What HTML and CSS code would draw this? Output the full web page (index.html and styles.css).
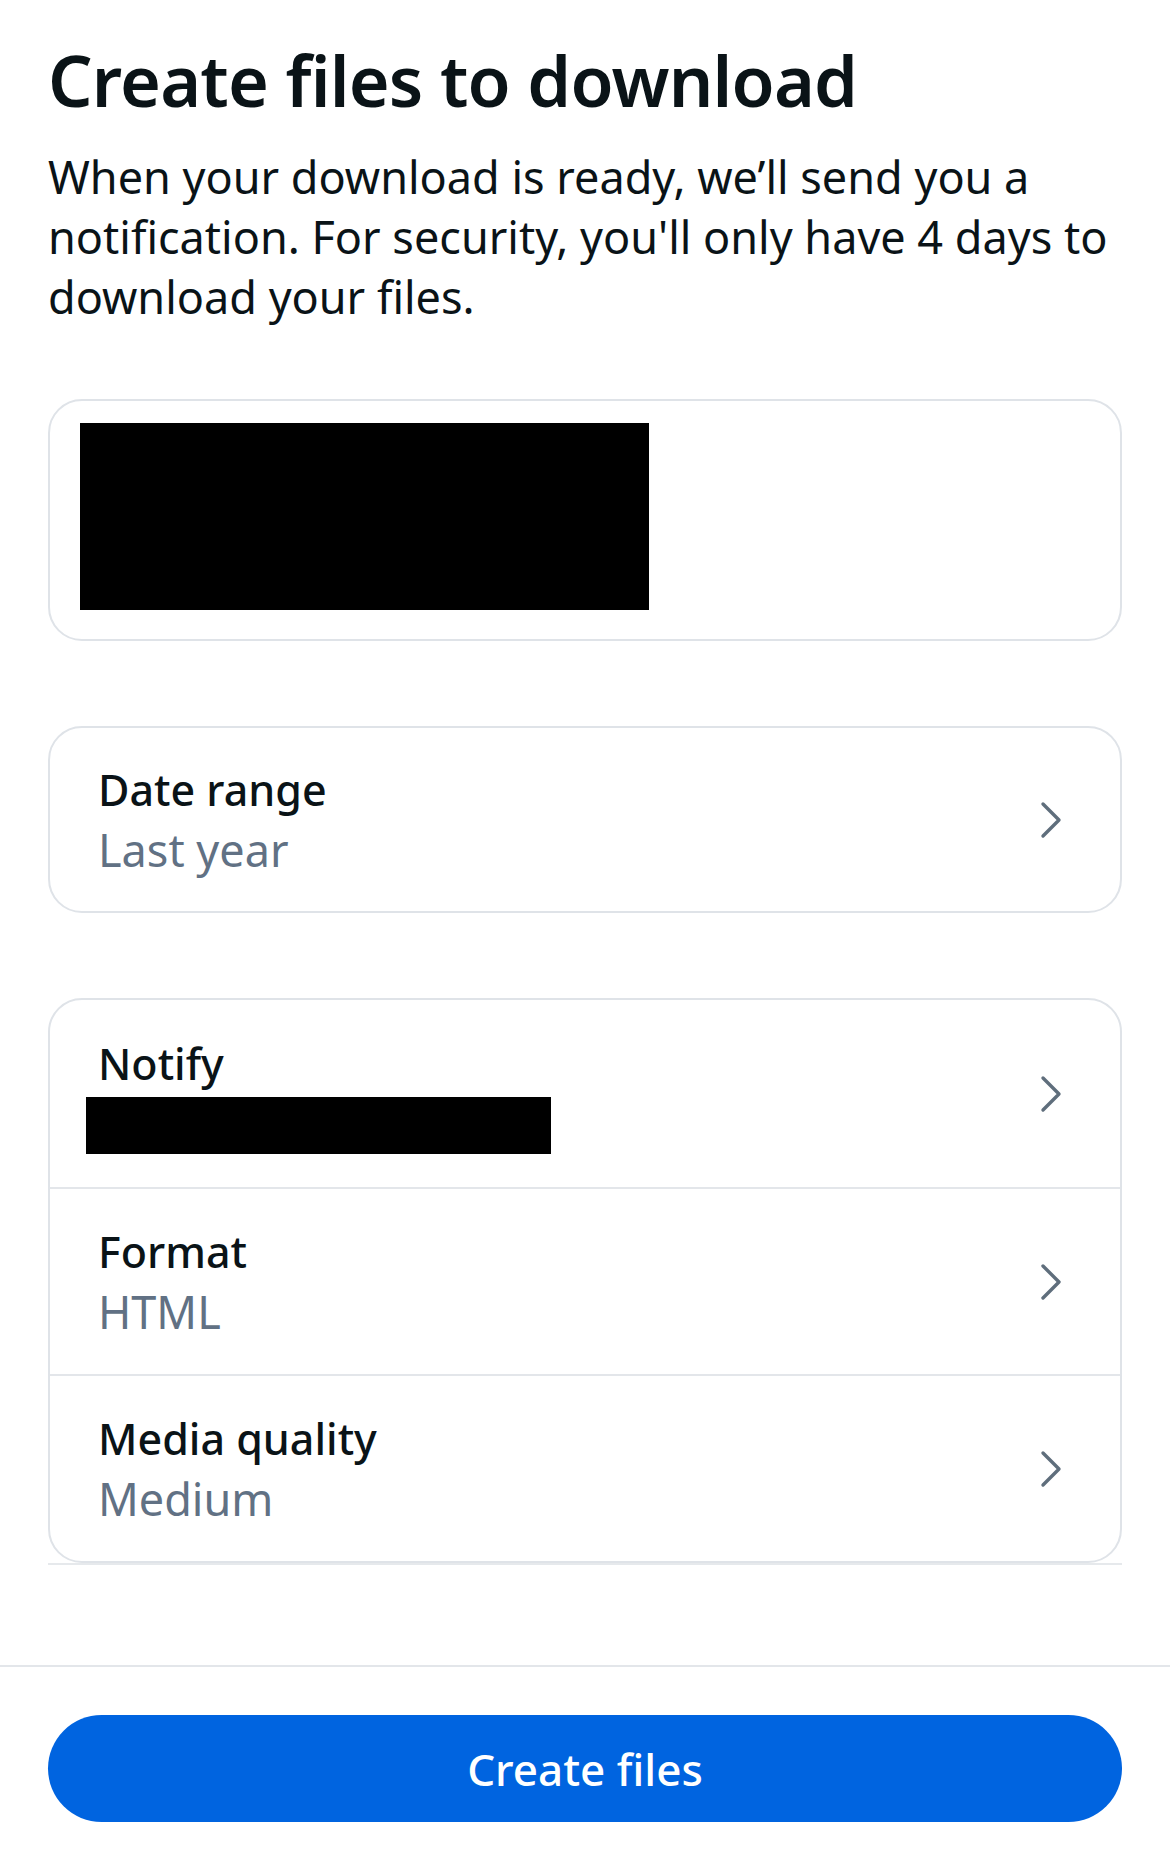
FILE: index.html
```html
<!DOCTYPE html>
<html lang="en">
<head>
<meta charset="utf-8">
<title>Create files to download</title>
<link rel="stylesheet" href="styles.css">
</head>
<body>
<div class="page">
  <main class="content">
    <h1 class="title">Create files to download</h1>
    <p class="intro">When your download is ready, we’ll send you a notification. For security, you'll only have 4 days to download your files.</p>

    <section class="card card-account">
      <div class="redact redact-account"></div>
    </section>

    <section class="card">
      <div class="row">
        <div class="row-text">
          <div class="row-label">Date range</div>
          <div class="row-value">Last year</div>
        </div>
        <svg class="chevron" viewBox="0 0 24 40" aria-hidden="true"><path d="M4 4 L20 20 L4 36"/></svg>
      </div>
    </section>

    <section class="card card-list">
      <div class="row">
        <div class="row-text">
          <div class="row-label">Notify</div>
          <div class="redact redact-notify"></div>
        </div>
        <svg class="chevron" viewBox="0 0 24 40" aria-hidden="true"><path d="M4 4 L20 20 L4 36"/></svg>
      </div>
      <div class="row">
        <div class="row-text">
          <div class="row-label">Format</div>
          <div class="row-value">HTML</div>
        </div>
        <svg class="chevron" viewBox="0 0 24 40" aria-hidden="true"><path d="M4 4 L20 20 L4 36"/></svg>
      </div>
      <div class="row">
        <div class="row-text">
          <div class="row-label">Media quality</div>
          <div class="row-value">Medium</div>
        </div>
        <svg class="chevron" viewBox="0 0 24 40" aria-hidden="true"><path d="M4 4 L20 20 L4 36"/></svg>
      </div>
    </section>
    <div class="list-rule"></div>
  </main>

  <footer class="footer">
    <button class="primary-btn" type="button">Create files</button>
  </footer>
</div>
</body>
</html>
```

FILE: styles.css
```css
* { box-sizing: border-box; }

html, body {
  margin: 0;
  padding: 0;
  background: #ffffff;
}

body {
  font-family: "Noto Sans", "Open Sans", sans-serif;
  color: #1c2b33;
}

.page {
  min-height: 100vh;
  display: flex;
  flex-direction: column;
}

.content {
  flex: 1;
  padding: 38px 48px 0;
  display: flex;
  flex-direction: column;
}

.title {
  margin: 0;
  font-size: 70px;
  line-height: 84px;
  font-weight: 600;
  color: #0a1317;
  letter-spacing: -0.8px;
}

.intro {
  margin: 25px 0 0;
  font-size: 45px;
  line-height: 60px;
  font-weight: 400;
  color: #0a1317;
}

.card {
  border: 2px solid #dfe3e8;
  border-radius: 34px;
  background: #fff;
}

.card + .card { margin-top: 85px; }

.card-account {
  margin-top: 72px;
  height: 242px;
  padding: 22px 30px;
}

.redact {
  background: #000;
}

.redact-account {
  width: 569px;
  height: 187px;
}

.redact-notify {
  width: 465px;
  height: 57px;
  margin: 3px 0 0 -12px;
}

.row {
  display: flex;
  align-items: center;
  justify-content: space-between;
  height: 183px;
  padding: 0 48px 0 48px;
}

.card-list .row { height: 187px; }

.card-list .row + .row {
  border-top: 2px solid #e3e6ea;
}

.row-label {
  font-size: 43px;
  line-height: 60px;
  font-weight: 500;
  color: #0a1317;
}

.row-value {
  font-size: 45px;
  line-height: 60px;
  color: #617184;
}

.chevron {
  width: 24px;
  height: 40px;
  fill: none;
  stroke: #5f6e7c;
  stroke-width: 3.4;
  stroke-linecap: round;
  stroke-linejoin: round;
  margin-right: 9px;
}

.list-rule {
  height: 2px;
  background: #e6e9ec;
  margin-top: 0;
}

.footer {
  border-top: 2px solid #e3e6ea;
  padding: 48px 48px 32px;
}

.primary-btn {
  display: block;
  width: 100%;
  height: 107px;
  border: none;
  border-radius: 54px;
  background: #0064e0;
  color: #ffffff;
  font-family: "Noto Sans", "Open Sans", sans-serif;
  font-size: 44px;
  font-weight: 500;
}
```
